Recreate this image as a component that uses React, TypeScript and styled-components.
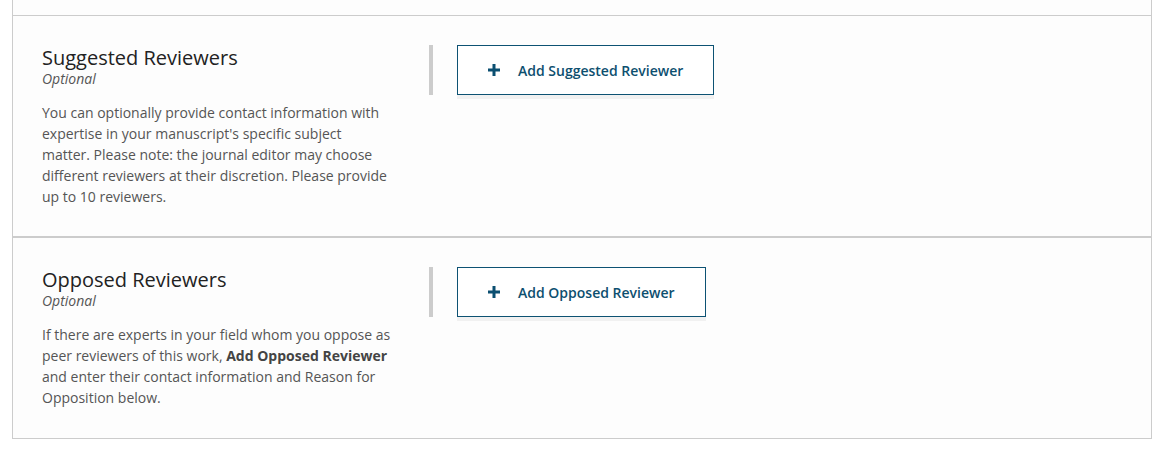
import React from 'react';
import styled, { createGlobalStyle } from 'styled-components';

const GlobalStyle = createGlobalStyle`
  body {
    margin: 0;
    background: #ffffff;
    font-family: 'Open Sans', 'Liberation Sans', sans-serif;
  }
`;

const Panel = styled.div`
  margin: 0 10px 0 12px;
  border-left: 1px solid #cccccc;
  border-right: 1px solid #cccccc;
  border-bottom: 1px solid #cccccc;
  background: #fdfdfd;
`;

const PrevSection = styled.div`
  height: 15px;
  border-bottom: 1px solid #cccccc;
`;

const Section = styled.section<{ $divider?: boolean }>`
  display: flex;
  align-items: flex-start;
  padding: 30px 29px ${(p) => (p.$divider ? '29px' : '30px')};
  border-bottom: ${(p) => (p.$divider ? '2px solid #cccccc' : 'none')};
`;

const Info = styled.div`
  flex: 0 0 350px;
  margin-right: 37px;
`;

const Title = styled.h2`
  margin: 0;
  font-size: 20px;
  line-height: 24px;
  font-weight: 400;
  color: #222222;
`;

const Optional = styled.div`
  font-size: 14px;
  line-height: 18px;
  font-style: italic;
  color: #555555;
`;

const Text = styled.p`
  margin: 14px 0 0;
  font-size: 14px;
  line-height: 21px;
  color: #555555;

  b {
    font-weight: 700;
    color: #444444;
  }
`;

const Actions = styled.div`
  margin-top: -1px;
  border-left: 4px solid #cccccc;
  padding-left: 24px;
`;

const AddButton = styled.button`
  display: flex;
  align-items: center;
  gap: 18px;
  height: 50px;
  padding: 0 30px;
  background: #ffffff;
  border: 1px solid #0d5273;
  box-shadow: 0 4px 0 #f1f1f1;
  font-family: 'Open Sans', 'Liberation Sans', sans-serif;
  font-size: 14px;
  font-weight: 600;
  color: #0d4f6f;
  cursor: pointer;
`;

const Plus = () => (
  <svg width="12" height="12" viewBox="0 0 12 12">
    <rect x="4.5" y="0" width="3" height="12" fill="#0b4f71" />
    <rect x="0" y="4.5" width="12" height="3" fill="#0b4f71" />
  </svg>
);

export default function App() {
  return (
    <>
      <GlobalStyle />
      <Panel>
        <PrevSection />
        <Section $divider>
          <Info>
            <Title>Suggested Reviewers</Title>
            <Optional>Optional</Optional>
            <Text>
              You can optionally provide contact information with expertise in your
              manuscript's specific subject matter. Please note: the journal editor may
              choose different reviewers at their discretion. Please provide up to 10
              reviewers.
            </Text>
          </Info>
          <Actions>
            <AddButton>
              <Plus />
              Add Suggested Reviewer
            </AddButton>
          </Actions>
        </Section>
        <Section>
          <Info>
            <Title>Opposed Reviewers</Title>
            <Optional>Optional</Optional>
            <Text>
              If there are experts in your field whom you oppose as peer reviewers of this
              work, <b>Add Opposed Reviewer</b> and enter their contact information and
              Reason for Opposition below.
            </Text>
          </Info>
          <Actions>
            <AddButton>
              <Plus />
              Add Opposed Reviewer
            </AddButton>
          </Actions>
        </Section>
      </Panel>
    </>
  );
}
